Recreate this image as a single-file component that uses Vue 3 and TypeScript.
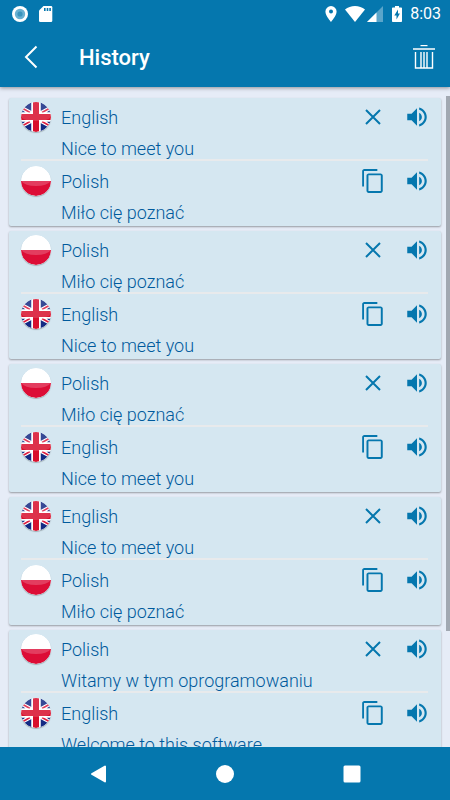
<script setup lang="ts">
import { ref } from 'vue'

type Language = 'English' | 'Polish'

interface Phrase {
  language: Language
  text: string
}

interface Entry {
  id: number
  phrases: [Phrase, Phrase]
}

const meetEnglish: Phrase = { language: 'English', text: 'Nice to meet you' }
const meetPolish: Phrase = { language: 'Polish', text: 'Miło cię poznać' }

const entries = ref<Entry[]>([
  { id: 1, phrases: [meetEnglish, meetPolish] },
  { id: 2, phrases: [meetPolish, meetEnglish] },
  { id: 3, phrases: [meetPolish, meetEnglish] },
  { id: 4, phrases: [meetEnglish, meetPolish] },
  {
    id: 5,
    phrases: [
      { language: 'Polish', text: 'Witamy w tym oprogramowaniu' },
      { language: 'English', text: 'Welcome to this software' },
    ],
  },
])

function removeEntry(id: number) {
  entries.value = entries.value.filter((entry) => entry.id !== id)
}

function clearHistory() {
  entries.value = []
}

function copyPhrase(text: string) {
  void navigator.clipboard?.writeText(text)
}

function speak(phrase: Phrase) {
  const utterance = new SpeechSynthesisUtterance(phrase.text)
  utterance.lang = phrase.language === 'Polish' ? 'pl-PL' : 'en-GB'
  window.speechSynthesis.speak(utterance)
}
</script>

<template>
  <div class="screen">
    <header class="top">
      <div class="status">
        <svg class="status-icon" viewBox="0 0 16 16" aria-hidden="true">
          <circle cx="8" cy="8" r="8" fill="#fff" />
          <circle cx="8" cy="8" r="5.2" fill="#69b1d2" />
          <circle cx="8" cy="8" r="2.6" fill="#3a94bd" />
        </svg>
        <svg class="status-icon sd" viewBox="0 0 16 16" aria-hidden="true">
          <path d="M5.5 0H13a1.3 1.3 0 0 1 1.3 1.3v13.4A1.3 1.3 0 0 1 13 16H2.300a1.300 1.300 0 0 1-1.300-1.300V4.500z" fill="#fff" />
          <path d="M6 2h1.600v3H6zM8.700 2h1.600v3H8.700zM11.300 2h1.600v3h-1.600z" fill="#0577ae" />
        </svg>
        <span class="spacer"></span>
        <svg class="pin" viewBox="0 0 12 16" aria-hidden="true">
          <path fill-rule="evenodd" d="M6 0a5.600 5.600 0 0 0-5.600 5.600C.4 9.800 6 16 6 16s5.600-6.200 5.600-10.400A5.600 5.600 0 0 0 6 0zm0 7.600a2 2 0 1 1 0-4 2 2 0 0 1 0 4z" fill="#fff" />
        </svg>
        <svg class="wifi" viewBox="0 0 20 16" aria-hidden="true">
          <path d="M10 16L0 3.600C2.800 1.400 6.200 0 10 0s7.200 1.400 10 3.600z" fill="#fff" />
        </svg>
        <svg class="signal" viewBox="0 0 16 16" aria-hidden="true">
          <path d="M16 0v16H0z" fill="#5aa5ca" />
          <path d="M9.500 6.500V16H0z" fill="#fff" />
        </svg>
        <svg class="battery" viewBox="0 0 10 16" aria-hidden="true">
          <path d="M3 0h4v1.500h2.200a.8.8 0 0 1 .8.8v12.900a.8.8 0 0 1-.8.8H.8a.8.8 0 0 1-.8-.8V2.300a.8.8 0 0 1 .8-.8H3z" fill="#fff" />
          <path d="M6 3.500L2.300 9.500h2.200v4L7.900 7.500H6z" fill="#0577ae" />
        </svg>
        <time class="clock">8:03</time>
      </div>
      <div class="app-bar">
        <button class="bar-button" type="button" aria-label="Back">
          <svg width="24" height="24" viewBox="0 0 24 24" aria-hidden="true">
            <path d="M18.500 1.500L8 12l10.500 10.500" fill="none" stroke="#fff" stroke-width="2" />
          </svg>
        </button>
        <h1>History</h1>
        <button class="bar-button" type="button" aria-label="Clear history" @click="clearHistory">
          <svg width="24" height="24" viewBox="0 0 24 24" aria-hidden="true">
            <path d="M8.500 .5h7" fill="none" stroke="#fff" stroke-width="1.400" />
            <path d="M1 4h22M3.500 7v16h17V7M9 7v16M15 7v16M12 7v16" fill="none" stroke="#fff" stroke-width="1.400" />
          </svg>
        </button>
      </div>
    </header>

    <main class="content">
      <ul class="list">
        <li v-for="entry in entries" :key="entry.id" class="card">
          <section v-for="(phrase, index) in entry.phrases" :key="index" class="phrase">
            <div class="phrase-head">
              <svg v-if="phrase.language === 'English'" class="flag" viewBox="0 0 30 30" aria-hidden="true">
                <clipPath :id="`uk-${entry.id}-${index}`"><circle cx="15" cy="15" r="15" /></clipPath>
                <g :clip-path="`url(#uk-${entry.id}-${index})`">
                  <rect width="30" height="30" fill="#fff" />
                  <path d="M10.500 0v9L3 5 7 0zM19.500 0v9L27 5l-4-5zM10.500 30v-9L3 25l4 5zM19.500 30v-9l7.500 4-4 5z" fill="#142a83" />
                  <path d="M0 7v3.500h4.500zM30 7v3.500h-4.500zM0 23v-3.500h4.500zM30 23v-3.500h-4.500z" fill="#142a83" />
                  <path d="M1 6l8 4.500M29 6l-8 4.500M1 24l8-4.500M29 24l-8-4.500" stroke="#dd1d3f" stroke-width="1.500" />
                  <path d="M15 0v30M0 15h30" stroke="#fff" stroke-width="9" />
                  <path d="M15 0v30M0 15h30" stroke="#d80f2c" stroke-width="6" />
                  <path d="M0 0h30v15Q27 19 15 19T0 15z" fill="#fff" opacity=".15" />
                </g>
              </svg>
              <svg v-else class="flag" viewBox="0 0 30 30" aria-hidden="true">
                <circle cx="15" cy="15" r="15" fill="#fff" />
                <path d="M0 15a15 15 0 0 0 30 0z" fill="#dc0d36" />
                <path d="M0 15h30Q26 20 15 20T0 15z" fill="#e33d5f" />
              </svg>
              <h2>{{ phrase.language }}</h2>
              <button v-if="index === 0" class="action" type="button" aria-label="Delete" @click="removeEntry(entry.id)">
                <svg width="26" height="26" viewBox="0 0 26 26" aria-hidden="true">
                  <path d="M6 6l14 14M20 6L6 20" fill="none" stroke="currentColor" stroke-width="2" />
                </svg>
              </button>
              <button v-else class="action" type="button" aria-label="Copy" @click="copyPhrase(phrase.text)">
                <svg width="26" height="26" viewBox="0 0 24 24" aria-hidden="true">
                  <path d="M16 1H4c-1.100 0-2 .9-2 2v14h1.700V2.700H16V1zm3 4H8c-1.100 0-2 .9-2 2v14c0 1.100.9 2 2 2h11c1.100 0 2-.9 2-2V7c0-1.100-.9-2-2-2zm.2 16.200H7.800V6.800h11.400v14.400z" fill="currentColor" />
                </svg>
              </button>
              <button class="action" type="button" aria-label="Listen" @click="speak(phrase)">
                <svg width="26" height="26" viewBox="0 0 24 24" aria-hidden="true">
                  <path d="M3 9v6h4l5 5V4L7 9H3zm13.500 3c0-1.770-1.020-3.290-2.500-4.030v8.050c1.480-.73 2.500-2.250 2.500-4.020zM14 3.230v2.060c2.890.86 5 3.540 5 6.710s-2.110 5.850-5 6.710v2.060c4.010-.91 7-4.490 7-8.770s-2.990-7.860-7-8.770z" fill="currentColor" />
                </svg>
              </button>
            </div>
            <p>{{ phrase.text }}</p>
          </section>
        </li>
      </ul>
      <div class="scroll-thumb" aria-hidden="true"></div>
    </main>

    <nav class="system-nav" aria-label="System">
      <button type="button" aria-label="Back">
        <svg width="18" height="18" viewBox="0 0 18 18" aria-hidden="true">
          <path d="M3 9L16 1.500v15z" fill="#fff" stroke="#fff" stroke-width="2" stroke-linejoin="round" />
        </svg>
      </button>
      <button type="button" aria-label="Home">
        <svg width="18" height="18" viewBox="0 0 18 18" aria-hidden="true"><circle cx="9" cy="9" r="9" fill="#fff" /></svg>
      </button>
      <button type="button" aria-label="Recent apps">
        <svg width="18" height="18" viewBox="0 0 18 18" aria-hidden="true"><rect x=".5" y=".5" width="17" height="17" rx="1.500" fill="#fff" /></svg>
      </button>
    </nav>
  </div>
</template>

<style>
body {
  margin: 0;
  background: #e6ecf7;
}
</style>

<style scoped>
.screen {
  display: flex;
  flex-direction: column;
  height: 100vh;
  overflow: hidden;
  background: #e6ecf7;
  color: #005a9c;
  font-family: Roboto, "Liberation Sans", sans-serif;
}

button {
  display: grid;
  place-items: center;
  padding: 0;
  border: 0;
  background: none;
  color: inherit;
  cursor: pointer;
}

h1,
h2,
p {
  margin: 0;
}

.top {
  position: relative;
  z-index: 1;
  flex: none;
  background: #0577ae;
  color: #fff;
  box-shadow: 0 1px 4px rgba(0, 0, 0, 0.4);
}

.status {
  display: flex;
  align-items: center;
  height: 27px;
  padding: 0 9px 0 12px;
}

.status svg {
  flex: none;
  height: 16px;
}

.status-icon {
  width: 16px;
}

.sd {
  margin-left: 10px;
}

.spacer {
  flex: 1;
}

.pin {
  width: 12px;
  margin-right: 8px;
}

.wifi {
  width: 20px;
  margin-right: 2px;
}

.signal {
  width: 16px;
  margin-right: 9px;
}

.battery {
  width: 10px;
  margin-right: 8px;
}

.clock {
  font-size: 16px;
  font-weight: 400;
  line-height: 24px;
}

.app-bar {
  display: flex;
  align-items: center;
  height: 60px;
  padding: 0 10px 0 14px;
}

.bar-button {
  width: 32px;
  height: 40px;
}

h1 {
  flex: 1;
  padding: 2px 0 0 33px;
  font-size: 22px;
  font-weight: 500;
  line-height: 28px;
}

.content {
  position: relative;
  flex: 1;
  min-height: 0;
}

.list {
  box-sizing: border-box;
  display: flex;
  flex-direction: column;
  gap: 5px;
  height: 100%;
  margin: 0;
  padding: 11px 9px;
  overflow-y: auto;
  list-style: none;
  scrollbar-width: none;
}

.card {
  flex: none;
  padding: 0 13px 0 12px;
  border-radius: 2px;
  background: #d5e7f1;
  box-shadow: 0 1px 2px rgba(0, 0, 0, 0.35);
}

.phrase {
  box-sizing: border-box;
  height: 64px;
}

.phrase-head {
  display: flex;
  align-items: center;
  height: 38px;
}

.flag {
  flex: none;
  width: 30px;
  height: 30px;
  border-radius: 50%;
  box-shadow: 0 1px 1px rgba(0, 0, 0, 0.25);
}

h2 {
  flex: 1;
  padding: 2px 0 0 10px;
  font-size: 18px;
  font-weight: 300;
  line-height: 24px;
}

.action {
  width: 26px;
  height: 26px;
  color: #0577ae;
}

.action + .action {
  margin-left: 18px;
  margin-right: -2px;
}

p {
  padding-left: 40px;
  font-size: 18px;
  font-weight: 300;
  line-height: 26px;
}

.phrase:first-child p {
  height: 23px;
  border-bottom: 2px solid #e8eaec;
}

.scroll-thumb {
  position: absolute;
  top: 9px;
  right: 0;
  width: 4px;
  height: 81%;
  background: #a2a8b2;
}

.system-nav {
  display: flex;
  flex: none;
  align-items: center;
  justify-content: center;
  gap: 79px;
  height: 53px;
  background: #0577ae;
}

.system-nav button {
  width: 48px;
  height: 48px;
}
</style>
